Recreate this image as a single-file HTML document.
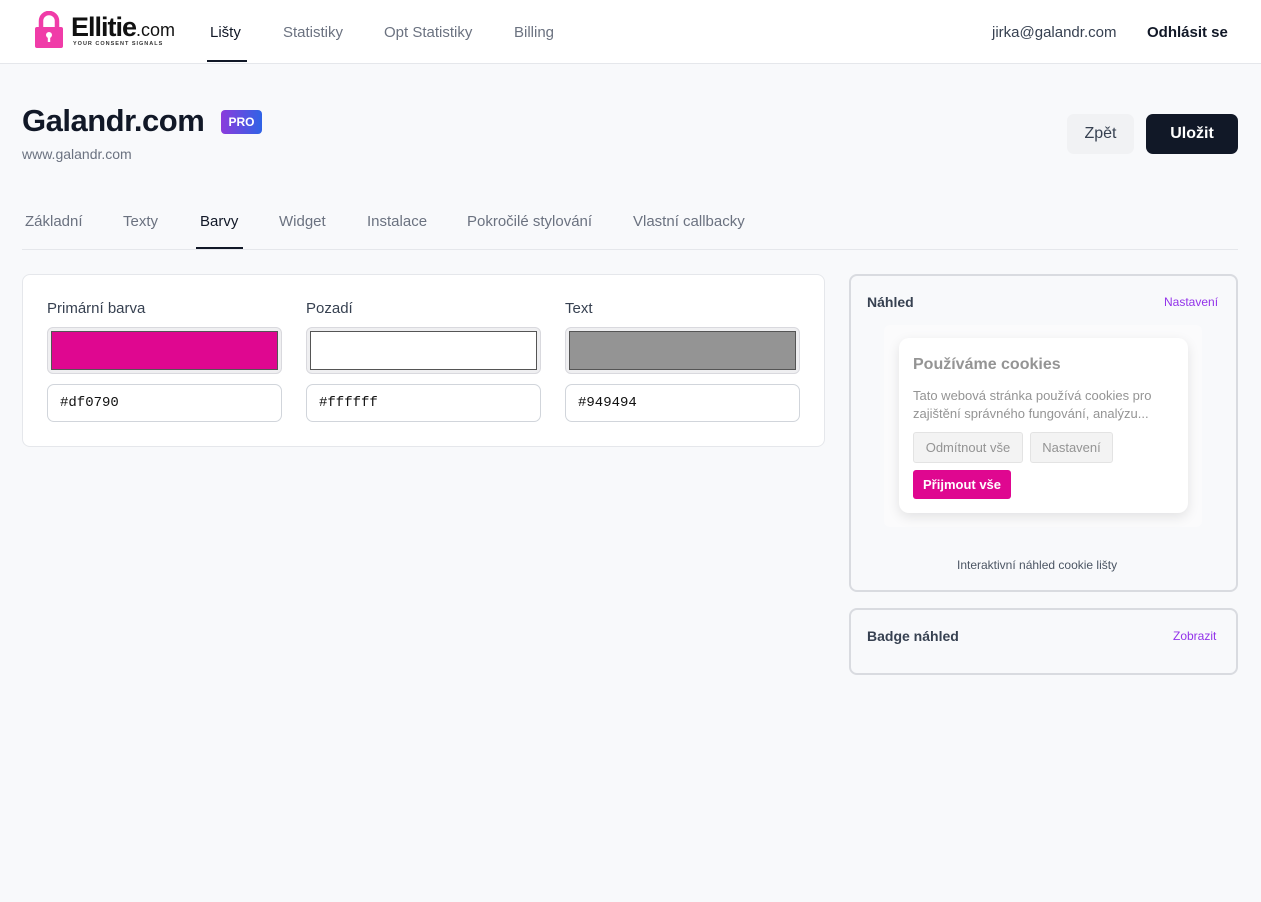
<!DOCTYPE html>
<html><head><meta charset="utf-8"><style>
*{box-sizing:border-box;margin:0;padding:0}
body{width:1261px;height:902px;background:#f8f9fb;font-family:"Liberation Sans",sans-serif;color:#111827;position:relative;overflow:hidden}
.hdr{position:absolute;left:0;top:0;width:1261px;height:64px;background:#fff;border-bottom:1px solid #e5e7eb}
.a{position:absolute;white-space:nowrap}
.nav{font-size:15px;color:#6b7280;top:24px}
.tab{font-size:15px;color:#6b7280;top:213px}
.card{position:absolute;background:#fff;border:1px solid #e5e7eb;border-radius:8px}
.lbl{font-size:15px;color:#374151;top:300px}
.sw{position:absolute;top:327px;width:235px;height:47px;background:#efeff1;border:1px solid #d9d9de;border-radius:6px;padding:3px}
.sw div{width:100%;height:100%;border:1px solid #555}
.inp{position:absolute;top:384px;width:235px;height:38px;border:1px solid #d1d5db;border-radius:7px;background:#fff;font-family:"Liberation Mono",monospace;font-size:14px;padding:10px 12px;color:#111}
.pc{position:absolute;background:#f8f9fb;border:2px solid #d9dbe0;border-radius:8px}
</style></head><body>
<div class="hdr">
<svg class="a" style="left:34px;top:11px" width="30" height="37" viewBox="0 0 30 37"><path d="M7 17V10a8 8 0 0 1 16 0v7" fill="none" stroke="#f03ca8" stroke-width="4.5"/><rect x="1" y="16" width="28" height="21" rx="2" fill="#f03ca8"/><circle cx="15" cy="24" r="3" fill="#fff"/><rect x="13.8" y="25" width="2.4" height="6" fill="#fff"/></svg>
<div class="a" style="left:71px;top:12px;font-size:27px;font-weight:bold;letter-spacing:-1px;color:#111">Ellitie<span style="font-weight:normal;font-size:18px;letter-spacing:0">.<span>com</span></span></div>
<div class="a" style="left:73px;top:41px;font-size:5.5px;letter-spacing:1px;color:#333;font-weight:bold">YOUR CONSENT SIGNALS</div>
<div class="a nav" style="left:210px;color:#111827">Lišty</div>
<div class="a" style="left:207px;top:60px;width:40px;height:2px;background:#111827"></div>
<div class="a nav" style="left:283px">Statistiky</div>
<div class="a nav" style="left:384px">Opt Statistiky</div>
<div class="a nav" style="left:514px">Billing</div>
<div class="a nav" style="left:992px;color:#374151">jirka@galandr.com</div>
<div class="a nav" style="left:1147px;color:#111827;font-weight:bold">Odhlásit se</div>
</div>
<div class="a" style="left:22px;top:103px;font-size:31px;font-weight:bold;color:#111827;letter-spacing:-0.5px">Galandr.com</div>
<div class="a" style="left:221px;top:110px;width:41px;height:24px;border-radius:4px;background:linear-gradient(90deg,#8b3bdc,#2f63e6);color:#fff;font-size:12px;font-weight:bold;text-align:center;line-height:24px">PRO</div>
<div class="a" style="left:22px;top:146px;font-size:14px;color:#6b7280">www.galandr.com</div>
<div class="a" style="left:1067px;top:114px;width:67px;height:40px;background:#f1f2f4;border-radius:7px;font-size:16px;color:#374151;text-align:center;line-height:40px">Zpět</div>
<div class="a" style="left:1146px;top:114px;width:92px;height:40px;background:#111827;border-radius:7px;font-size:16px;color:#fff;font-weight:bold;text-align:center;line-height:40px">Uložit</div>
<div class="a tab" style="left:25px">Základní</div>
<div class="a tab" style="left:123px">Texty</div>
<div class="a tab" style="left:200px;color:#111827">Barvy</div>
<div class="a tab" style="left:279px">Widget</div>
<div class="a tab" style="left:367px">Instalace</div>
<div class="a tab" style="left:467px">Pokročilé stylování</div>
<div class="a tab" style="left:633px">Vlastní callbacky</div>
<div class="a" style="left:22px;top:249px;width:1216px;height:1px;background:#e5e7eb"></div>
<div class="a" style="left:196px;top:247px;width:47px;height:2px;background:#111827"></div>
<div class="card" style="left:22px;top:274px;width:803px;height:173px"></div>
<div class="a lbl" style="left:47px">Primární barva</div>
<div class="a lbl" style="left:306px">Pozadí</div>
<div class="a lbl" style="left:565px">Text</div>
<div class="sw" style="left:47px"><div style="background:#df0790"></div></div>
<div class="sw" style="left:306px"><div style="background:#fff"></div></div>
<div class="sw" style="left:565px"><div style="background:#949494"></div></div>
<div class="inp" style="left:47px">#df0790</div>
<div class="inp" style="left:306px">#ffffff</div>
<div class="inp" style="left:565px">#949494</div>
<div class="pc" style="left:849px;top:274px;width:389px;height:318px"></div>
<div class="a" style="left:867px;top:294px;font-size:14px;font-weight:bold;color:#374151">Náhled</div>
<div class="a" style="left:1164px;top:295px;font-size:12px;color:#9333ea">Nastavení</div>
<div class="a" style="left:884px;top:325px;width:318px;height:202px;background:#fbfbfc;border-radius:6px"></div>
<div class="a" style="left:899px;top:338px;width:289px;height:175px;background:#fff;border-radius:10px;box-shadow:0 4px 12px rgba(0,0,0,0.1)"></div>
<div class="a" style="left:913px;top:356px;font-size:16px;font-weight:bold;color:#949494">Používáme cookies</div>
<div class="a" style="left:913px;top:387px;font-size:13px;color:#949494;line-height:18px">Tato webová stránka používá cookies pro<br>zajištění správného fungování, analýzu...</div>
<div class="a" style="left:913px;top:432px;width:110px;height:31px;background:#f3f3f3;border:1px solid #e3e3e3;border-radius:3px;font-size:13px;color:#949494;text-align:center;line-height:29px">Odmítnout vše</div>
<div class="a" style="left:1030px;top:432px;width:83px;height:31px;background:#f3f3f3;border:1px solid #e3e3e3;border-radius:3px;font-size:13px;color:#949494;text-align:center;line-height:29px">Nastavení</div>
<div class="a" style="left:913px;top:470px;width:98px;height:29px;background:#df0790;border-radius:3px;font-size:13px;font-weight:bold;color:#fff;text-align:center;line-height:29px">Přijmout vše</div>
<div class="a" style="left:957px;top:558px;font-size:12px;color:#4b5563">Interaktivní náhled cookie lišty</div>
<div class="pc" style="left:849px;top:608px;width:389px;height:67px"></div>
<div class="a" style="left:867px;top:628px;font-size:14px;font-weight:bold;color:#374151">Badge náhled</div>
<div class="a" style="left:1173px;top:629px;font-size:12px;color:#9333ea">Zobrazit</div>
</body></html>
